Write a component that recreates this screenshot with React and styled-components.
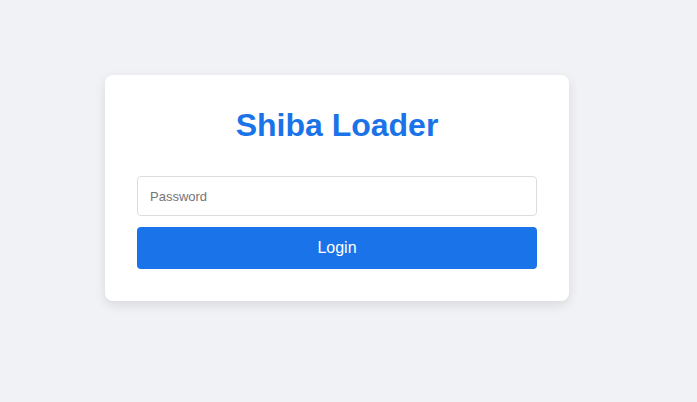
import React from 'react'
import styled, { createGlobalStyle } from 'styled-components'

const GlobalStyle = createGlobalStyle`
  html, body {
    margin: 0;
    padding: 0;
    background: #f0f2f5;
    font-family: "Liberation Sans", Arial, sans-serif;
  }
  * { box-sizing: border-box; }
`

const Page = styled.div`
  width: 100%;
  height: 100vh;
  padding: 75px 0 0 105px;
`

const Card = styled.div`
  width: 464px;
  background: #fff;
  border-radius: 8px;
  padding: 32px;
  box-shadow: 0 4px 12px rgba(0, 0, 0, 0.1);
  display: flex;
  flex-direction: column;
`

const Title = styled.h1`
  margin: 0 0 32px;
  font-size: 32px;
  line-height: 37px;
  font-weight: 700;
  color: #1a73e8;
  text-align: center;
`

const Input = styled.input`
  width: 100%;
  height: 40px;
  padding: 0 12px;
  border: 1px solid #dddddd;
  border-radius: 4px;
  font-family: "Liberation Sans", Arial, sans-serif;
  font-size: 13px;
  color: #333;
  outline: none;
  &::placeholder { color: #757575; }
`

const Button = styled.button`
  width: 100%;
  height: 42px;
  margin-top: 11px;
  border: none;
  border-radius: 4px;
  background: #1a73e8;
  color: #fff;
  font-family: "Liberation Sans", Arial, sans-serif;
  font-size: 16px;
  cursor: pointer;
`

const App = () => {
  return (
    <>
      <GlobalStyle />
      <Page>
        <Card>
          <Title>Shiba Loader</Title>
          <Input type="password" placeholder="Password" />
          <Button>Login</Button>
        </Card>
      </Page>
    </>
  )
}

export default App
